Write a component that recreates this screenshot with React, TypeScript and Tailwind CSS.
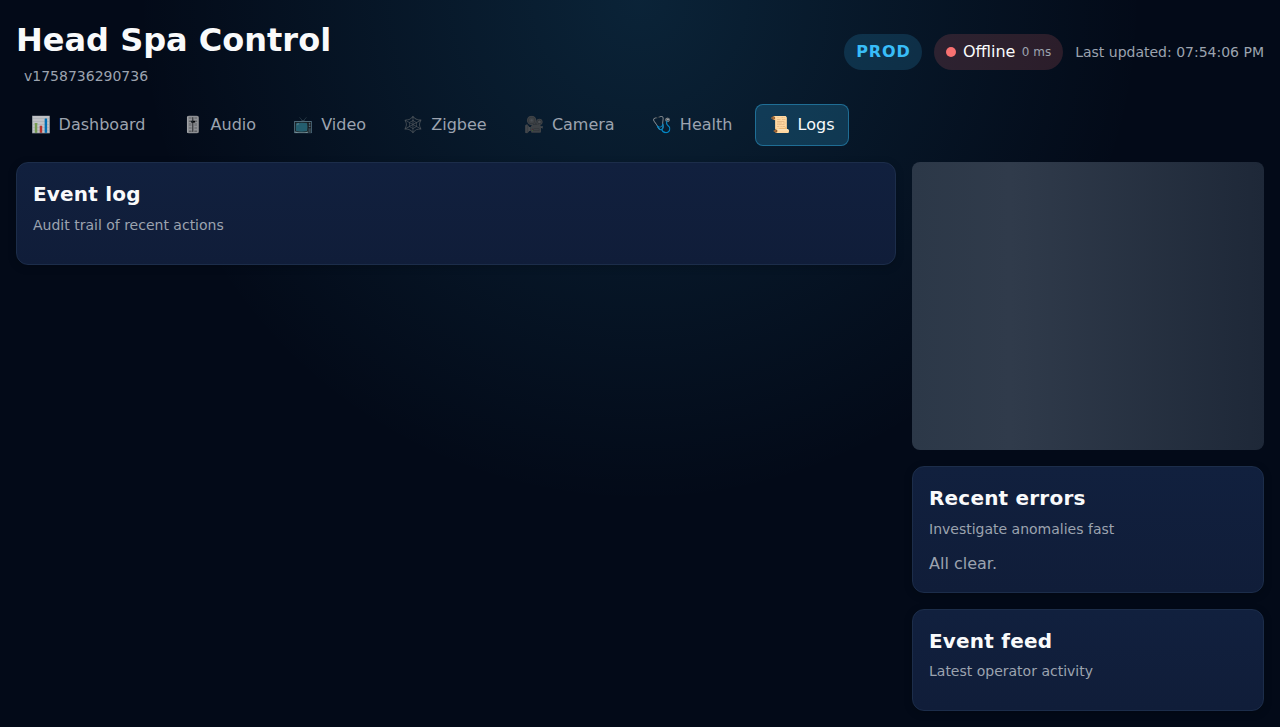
import type { ReactNode } from 'react';

const tabs = [
  ['📊', 'Dashboard'],
  ['🎚️', 'Audio'],
  ['📺', 'Video'],
  ['🕸️', 'Zigbee'],
  ['🎥', 'Camera'],
  ['🩺', 'Health'],
  ['📜', 'Logs'],
];

function Card({ title, subtitle, className, children }: { title: string; subtitle: string; className: string; children?: ReactNode }) {
  return (
    <section className={`rounded-xl border border-[#1c2d4a] bg-linear-to-b from-[#11203e] to-[#101d39] p-4 shadow-[0_2px_8px_rgba(0,0,0,0.2)] ${className}`}>
      <h2 className="text-xl leading-[30px] font-bold tracking-[0.2px] text-[#f9fafb]">{title}</h2>
      <p className="mt-[5.6px] text-sm leading-[21px] text-[#9ca3af]">{subtitle}</p>
      {children}
    </section>
  );
}

export default function App() {
  return (
    <div className="h-[727px] overflow-hidden bg-[#030a18] bg-[radial-gradient(circle_at_top,rgba(56,189,248,0.14),transparent_52%)] p-4 font-['DejaVu_Sans',sans-serif] text-[#f9fafb]">
      <header className="flex h-[72px] items-center justify-between">
        <div>
          <h1 className="text-[32px] leading-[48px] font-bold">Head Spa Control</h1>
          <p className="pl-2 text-sm leading-6 text-[#9ca3af]">v1758736290736</p>
        </div>
        <div className="flex items-center gap-3">
          <span className="flex h-9 items-center rounded-full bg-[#38bdf8]/16 px-3 font-bold tracking-[0.8px] text-[#38bdf8]">PROD</span>
          <span className="flex h-9 items-center rounded-full bg-[#f87171]/16 px-3">
            <i className="mr-[6.4px] size-2.5 rounded-full bg-[#f87171]" />
            Offline
            <small className="ml-[6.4px] text-xs text-[#9ca3af]">0 ms</small>
          </span>
          <span className="text-sm text-[#9ca3af]">Last updated: 07:54:06 PM</span>
        </div>
      </header>
      <nav className="mt-4 flex h-[42px] gap-2">
        {tabs.map(([icon, name]) => (
          <button key={name} className={`flex items-center gap-2 rounded-lg border px-[13.6px] ${name === 'Logs' ? 'border-[#38bdf8]/40 bg-[#38bdf8]/20 text-[#f9fafb]' : 'border-transparent text-[#9ca3af]'}`}>
            <span className={name === 'Logs' ? '' : 'opacity-75'}>{icon}</span>
            {name}
          </button>
        ))}
      </nav>
      <main className="mt-4 grid grid-cols-[880px_352px] items-start gap-4">
        <Card title="Event log" subtitle="Audit trail of recent actions" className="h-[103px]" />
        <aside className="flex flex-col gap-4">
          <div className="h-72 rounded-lg bg-linear-to-r from-[#2c3848] via-[#303b4b] via-28% to-[#1e2838]" />
          <Card title="Recent errors" subtitle="Investigate anomalies fast" className="h-[126.8px]">
            <p className="mt-3 leading-6 text-[#9ca3af]">All clear.</p>
          </Card>
          <Card title="Event feed" subtitle="Latest operator activity" className="h-[102.4px]" />
        </aside>
      </main>
    </div>
  );
}
